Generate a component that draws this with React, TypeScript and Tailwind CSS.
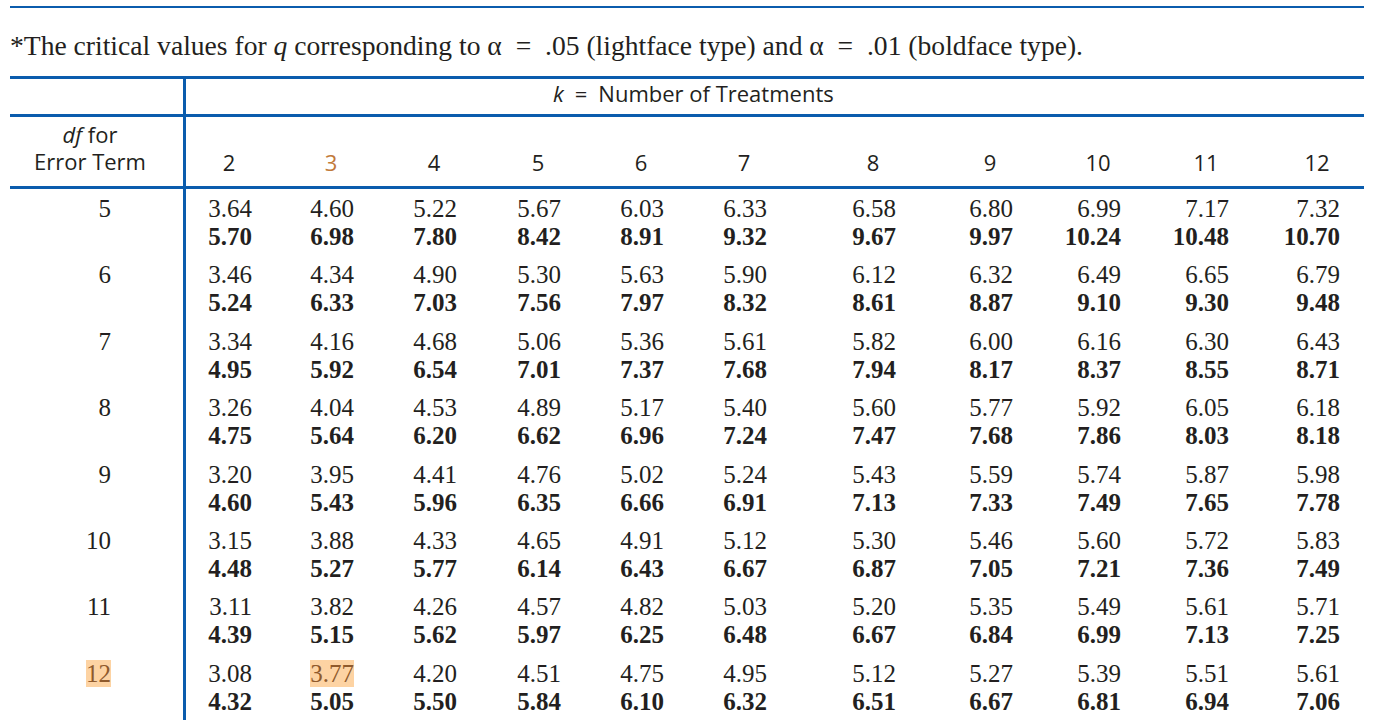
const ks = [2, 3, 4, 5, 6, 7, 8, 9, 10, 11, 12];

interface Row {
  df: number;
  light: string[];
  bold: string[];
}

const rows: Row[] = [
  { df: 5, light: ["3.64", "4.60", "5.22", "5.67", "6.03", "6.33", "6.58", "6.80", "6.99", "7.17", "7.32"], bold: ["5.70", "6.98", "7.80", "8.42", "8.91", "9.32", "9.67", "9.97", "10.24", "10.48", "10.70"] },
  { df: 6, light: ["3.46", "4.34", "4.90", "5.30", "5.63", "5.90", "6.12", "6.32", "6.49", "6.65", "6.79"], bold: ["5.24", "6.33", "7.03", "7.56", "7.97", "8.32", "8.61", "8.87", "9.10", "9.30", "9.48"] },
  { df: 7, light: ["3.34", "4.16", "4.68", "5.06", "5.36", "5.61", "5.82", "6.00", "6.16", "6.30", "6.43"], bold: ["4.95", "5.92", "6.54", "7.01", "7.37", "7.68", "7.94", "8.17", "8.37", "8.55", "8.71"] },
  { df: 8, light: ["3.26", "4.04", "4.53", "4.89", "5.17", "5.40", "5.60", "5.77", "5.92", "6.05", "6.18"], bold: ["4.75", "5.64", "6.20", "6.62", "6.96", "7.24", "7.47", "7.68", "7.86", "8.03", "8.18"] },
  { df: 9, light: ["3.20", "3.95", "4.41", "4.76", "5.02", "5.24", "5.43", "5.59", "5.74", "5.87", "5.98"], bold: ["4.60", "5.43", "5.96", "6.35", "6.66", "6.91", "7.13", "7.33", "7.49", "7.65", "7.78"] },
  { df: 10, light: ["3.15", "3.88", "4.33", "4.65", "4.91", "5.12", "5.30", "5.46", "5.60", "5.72", "5.83"], bold: ["4.48", "5.27", "5.77", "6.14", "6.43", "6.67", "6.87", "7.05", "7.21", "7.36", "7.49"] },
  { df: 11, light: ["3.11", "3.82", "4.26", "4.57", "4.82", "5.03", "5.20", "5.35", "5.49", "5.61", "5.71"], bold: ["4.39", "5.15", "5.62", "5.97", "6.25", "6.48", "6.67", "6.84", "6.99", "7.13", "7.25"] },
  { df: 12, light: ["3.08", "3.77", "4.20", "4.51", "4.75", "4.95", "5.12", "5.27", "5.39", "5.51", "5.61"], bold: ["4.32", "5.05", "5.50", "5.84", "6.10", "6.32", "6.51", "6.67", "6.81", "6.94", "7.06"] },
];

const grid =
  "grid grid-cols-[176px_76px_102px_103px_104px_103px_103px_129px_117px_108px_108px_111px_1fr]";

const serif = "font-['Liberation_Serif',serif]";
const sans = "font-['Open_Sans',sans-serif]";

export default function App() {
  return (
    <div className={`w-[1381px] h-[723px] overflow-hidden bg-white pt-[6px] pl-[10px] pr-[17px] text-[#231f20] ${serif}`}>
      <div className="h-[2px] bg-[#0b5cad]" />

      {/* caption */}
      <div className="h-[68px] pt-[23px] text-[27.6px] leading-[30px] whitespace-nowrap">
        *The critical values for <i>q</i> corresponding to α{"\u2002"}={"\u2002"}.05 (lightface type) and α{"\u2002"}={"\u2002"}.01 (boldface type).
      </div>

      <div className="border-t-[3px] border-[#0b5cad]">
        {/* k header */}
        <div className="grid grid-cols-[176px_1fr] h-[35px]">
          <div className="border-r-[3px] border-[#0b5cad]" />
          <div className={`${sans} text-[22px] leading-[28px] pl-[367px] whitespace-nowrap`}>
            <i>k</i>{"\u2002"}={"\u2002"}Number of Treatments
          </div>
        </div>
        <div className="h-[3px] bg-[#0b5cad]" />

        {/* column header */}
        <div className={`${grid} h-[69px] ${sans} text-[22px] leading-[27px]`}>
          <div className="flex flex-col gap-[1px] border-r-[3px] border-[#0b5cad] pt-[4px] pr-[13px] text-center leading-[26px]">
            <div>
              <i>df</i> for
            </div>
            <div>Error Term</div>
          </div>
          {ks.map((k) => (
            <div key={k} className="flex items-end justify-end pr-[10px] pb-[10px]">
              <span className={`inline-block w-[46px] text-center ${k === 3 ? "text-[#c27a3a]" : ""}`}>{k}</span>
            </div>
          ))}
          <div />
        </div>
        <div className="h-[3px] bg-[#0b5cad]" />

        {/* data */}
        {rows.map((r) => (
          <div key={r.df} className={`${grid} h-[66.4px] text-[25px] leading-[28px]`}>
            <div className="border-r-[3px] border-[#0b5cad] pt-[6px] pr-[72px] text-right">
              <span className={r.df === 12 ? "bg-[#fdd3a3] text-[#8f5a2c]" : ""}>{r.df}</span>
            </div>
            {r.light.map((v, i) => (
              <div key={i} className="pt-[6px] pr-[10px] text-right">
                <div>
                  <span className={r.df === 12 && i === 1 ? "bg-[#fdd3a3] text-[#8f5a2c]" : ""}>{v}</span>
                </div>
                <div className="font-bold">{r.bold[i]}</div>
              </div>
            ))}
            <div />
          </div>
        ))}
      </div>
    </div>
  );
}
